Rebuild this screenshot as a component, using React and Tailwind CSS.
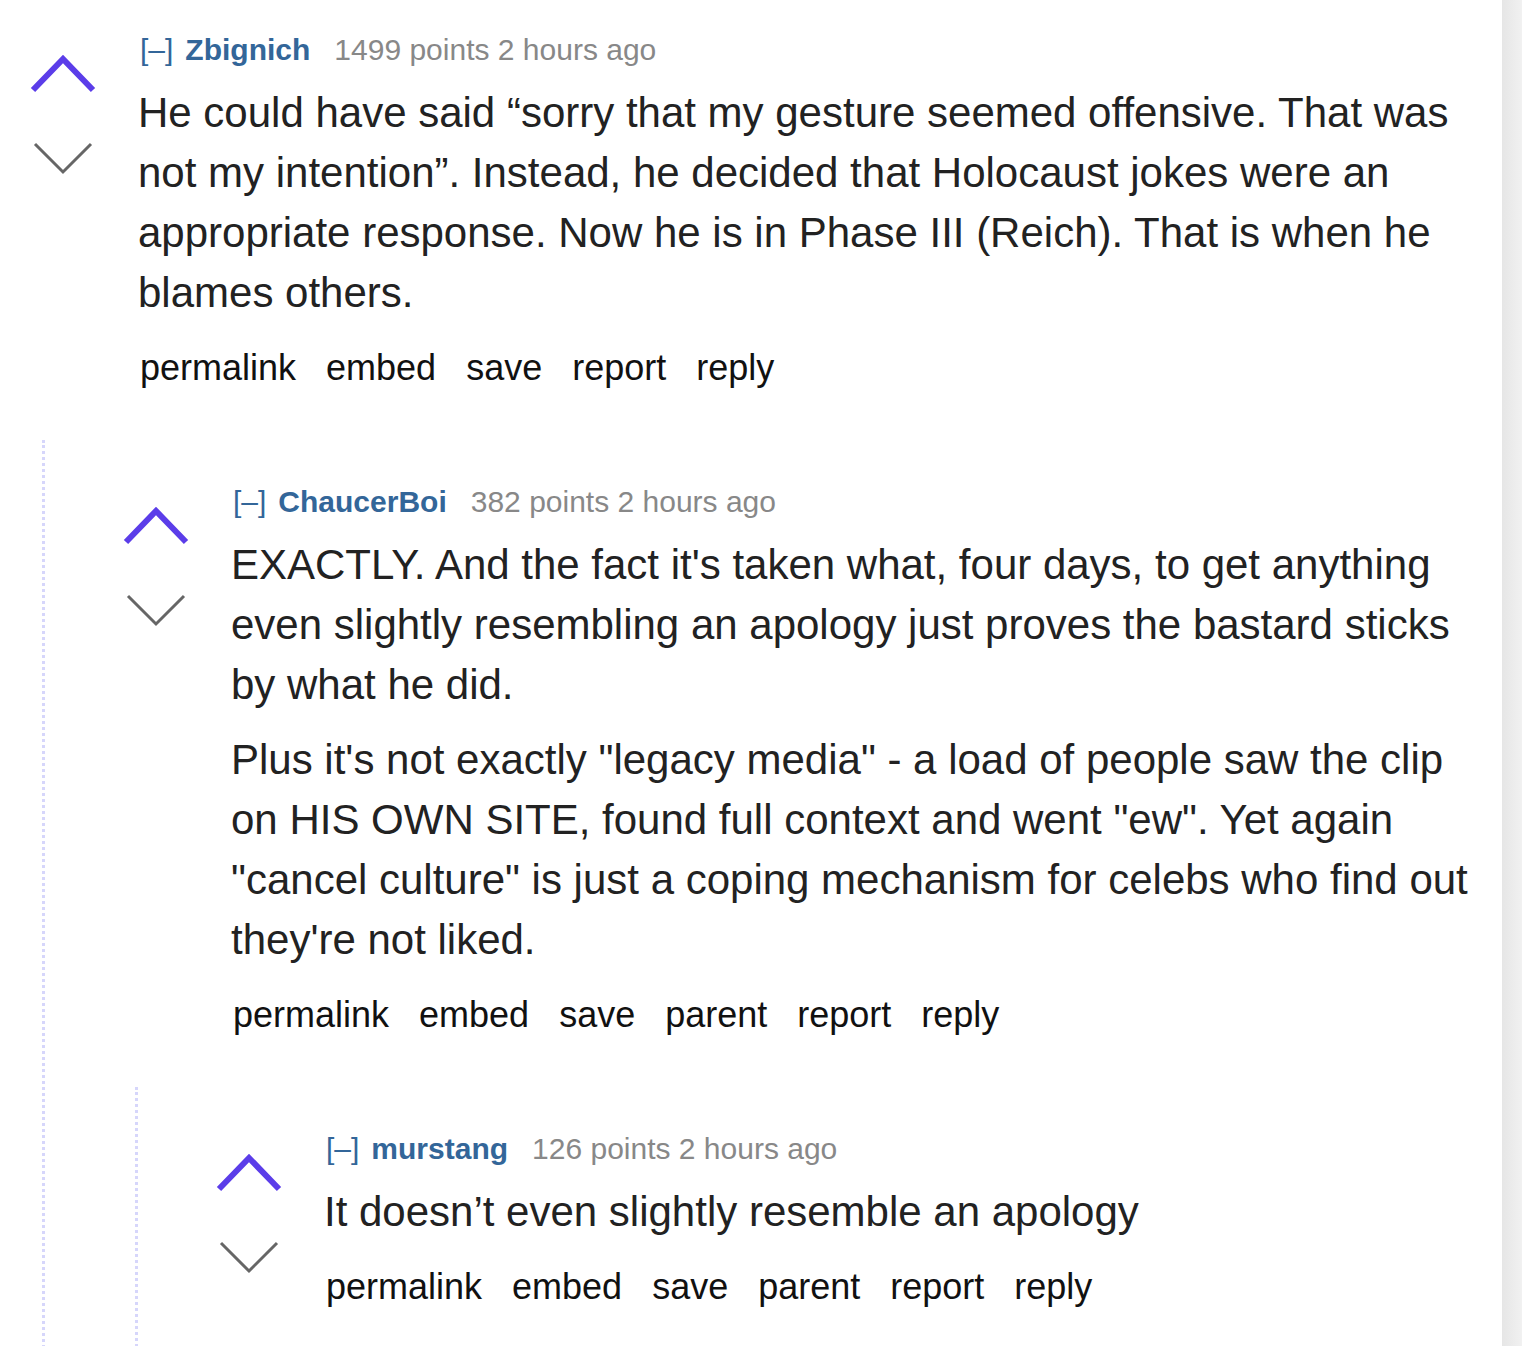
import React from 'react'

const comments = {
  author: 'Zbignich',
  points: 1499,
  body: ['He could have said “sorry that my gesture seemed offensive. That was not my intention”. Instead, he decided that Holocaust jokes were an appropriate response. Now he is in Phase III (Reich). That is when he blames others.'],
  actions: ['permalink', 'embed', 'save', 'report', 'reply'],
  children: [
    {
      author: 'ChaucerBoi',
      points: 382,
      body: [
        "EXACTLY. And the fact it's taken what, four days, to get anything even slightly resembling an apology just proves the bastard sticks by what he did.",
        'Plus it\'s not exactly "legacy media" - a load of people saw the clip on HIS OWN SITE, found full context and went "ew". Yet again "cancel culture" is just a coping mechanism for celebs who find out they\'re not liked.',
      ],
      actions: ['permalink', 'embed', 'save', 'parent', 'report', 'reply'],
      children: [
        {
          author: 'murstang',
          points: 126,
          body: ['It doesn’t even slightly resemble an apology'],
          actions: ['permalink', 'embed', 'save', 'parent', 'report', 'reply'],
          children: [],
        },
      ],
    },
  ],
}

function Arrows() {
  return (
    <div className="w-[138px] shrink-0 flex flex-col items-center pr-[12px] pt-[54px]">
      <svg width="66" height="40" viewBox="0 0 66 40">
        <path d="M3 36 L33 5 L63 36" fill="none" stroke="#5b3de9" strokeWidth="6" />
      </svg>
      <svg width="62" height="36" viewBox="0 0 62 36" className="mt-[48px]">
        <path d="M3 2 L31 30 L59 2" fill="none" stroke="#666666" strokeWidth="3" />
      </svg>
    </div>
  )
}

function Comment({ c, last }) {
  return (
    <div className={last ? 'pb-[200px]' : ''}>
      <div className="flex">
        <Arrows />
        <div className="flex-1 pr-[30px]">
          <div className="pt-[30px] text-[30px] leading-[40px] flex items-baseline">
            <span className="text-[#336699] ml-[2px]">[–]</span>
            <span className="text-[#336699] font-bold ml-[12px]">{c.author}</span>
            <span className="text-[#888888] ml-[24px]">{c.points} points 2 hours ago</span>
          </div>
          <div className="mt-[13px] text-[42px] leading-[60px] text-[#222222]">
            {c.body.map((p, i) => (
              <p key={i} className={i > 0 ? 'mt-[15px]' : ''}>{p}</p>
            ))}
          </div>
          <div className="mt-[23px] flex gap-[30px] text-[36px] leading-[44px] text-[#111111] pl-[2px]">
            {c.actions.map(a => <span key={a}>{a}</span>)}
          </div>
        </div>
      </div>
      {c.children.length > 0 && (
        <div className="ml-[42px] mt-[50px] pt-[12px] border-l-[3px] border-dotted border-[#d6d6fb] pl-[48px]">
          {c.children.map(ch => <Comment key={ch.author} c={ch} last={ch.children.length === 0} />)}
        </div>
      )}
    </div>
  )
}

export default function App() {
  return (
    <div className="flex h-[1346px] overflow-hidden bg-white" style={{ fontFamily: '"Liberation Sans", Arial, sans-serif' }}>
      <div className="flex-1 overflow-hidden">
        <Comment c={comments} />
      </div>
      <div className="w-[20px] shrink-0 bg-gradient-to-r from-[#e6e6e6] to-[#f1f1f1]" />
    </div>
  )
}
